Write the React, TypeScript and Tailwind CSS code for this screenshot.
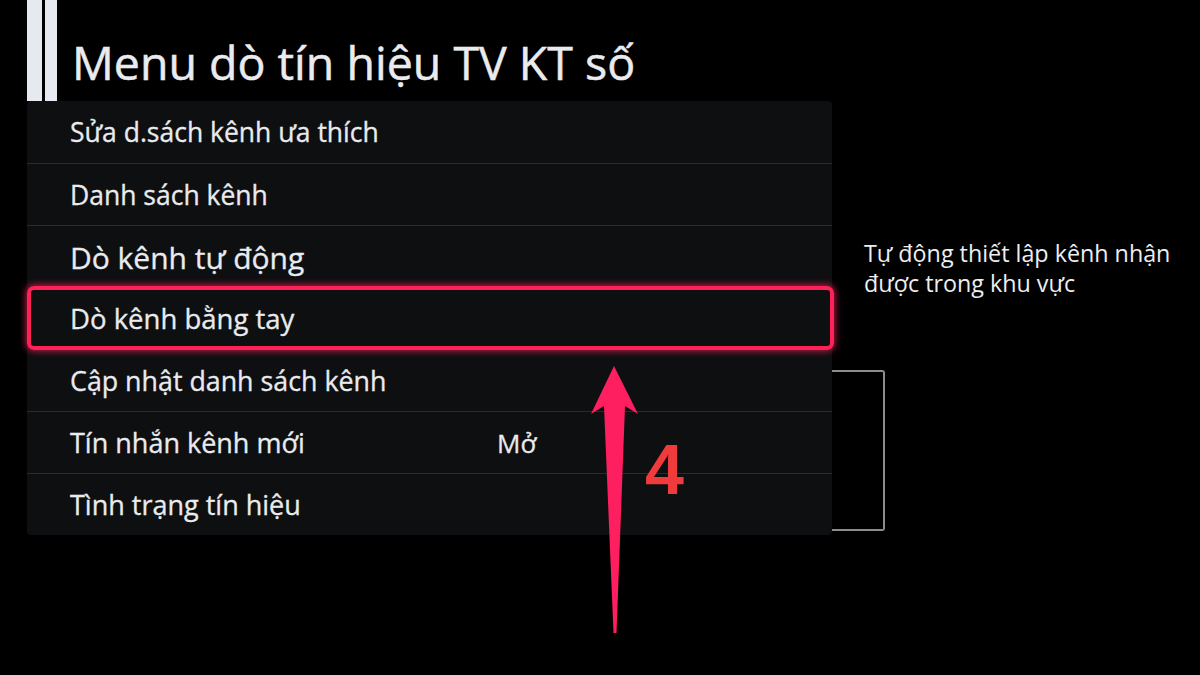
const items: { label: string; value?: string; size: string }[] = [
  { label: 'Sửa d.sách kênh ưa thích', size: 'text-[26.5px]' },
  { label: 'Danh sách kênh', size: 'text-[26.5px]' },
  { label: 'Dò kênh tự động', size: 'text-[30px]' },
  { label: 'Dò kênh bằng tay', size: 'text-[27.5px]' },
  { label: 'Cập nhật danh sách kênh', size: 'text-[26.8px]' },
  { label: 'Tín nhắn kênh mới', value: 'Mở', size: 'text-[27px]' },
  { label: 'Tình trạng tín hiệu', size: 'text-[27px]' },
];

const SELECTED = 3;

export default function App() {
  return (
    <div
      className="relative w-[1200px] h-[675px] overflow-hidden bg-black text-[#e9ebee]"
      style={{ fontFamily: '"Open Sans", "Noto Sans", sans-serif' }}
    >
      {/* tiêu đề */}
      <div className="flex h-[101px] pl-[27px]">
        <div className="w-[15px] h-full bg-[#e6eaf0]" />
        <div className="w-[12px] h-full ml-[3px] bg-[#e6eaf0]" />
        <h1 className="ml-[15px] mt-[34px] text-[46.5px] leading-[56px] [-webkit-text-stroke:0.5px_#e9ebee]">
          Menu dò tín hiệu TV KT số
        </h1>
      </div>

      <div className="flex">
        {/* danh sách menu */}
        <div className="ml-[27px] w-[805px] bg-[#0e0f11] rounded-sm">
          {items.map((it, i) => {
            const sel = i === SELECTED;
            const line = i > 0 && i !== SELECTED && i !== SELECTED + 1;
            return (
              <div
                key={it.label}
                className={
                  'relative flex items-center h-[62px] pl-[43px] [-webkit-text-stroke:0.3px_#e9ebee] ' +
                  (line ? 'border-t border-[#2a2b2e] ' : '') +
                  (sel ? 'z-10' : '')
                }
              >
                {sel && (
                  <div className="absolute -top-[1px] -bottom-[1px] left-0 -right-[2px] rounded-[7px] border-[4px] border-[#ff2259] shadow-[0_0_7px_1px_rgba(255,34,89,0.75)]" />
                )}
                <span className={it.size + ' w-[427px] whitespace-nowrap pt-[2px]'}>{it.label}</span>
                {it.value && <span className="text-[26px] pt-[2px]">{it.value}</span>}
              </div>
            );
          })}
        </div>

        {/* mô tả bên phải */}
        <div className="flex flex-col">
          <p className="ml-[32px] mt-[137px] text-[23.3px] leading-[30px] text-[#eceef0]">
            Tự động thiết lập kênh nhận
            <br />
            được trong khu vực
          </p>
          <div className="mt-[72px] w-[53px] h-[161px] border-y-2 border-r-2 border-[#8c8c8c] rounded-r-[3px]" />
        </div>
      </div>

      {/* mũi tên chú thích */}
      <svg className="absolute left-0 top-0" width="1200" height="675" viewBox="0 0 1200 675">
        <path
          d="M614 366 L638 414 L625 406 L616.5 633 L613.5 633 L604 406 L591 414 Z"
          fill="#fd1f60"
        />
      </svg>
      <div
        className="absolute left-[645px] top-[430px] text-[70px] leading-[80px] font-bold text-[#ef3b3c]"
        style={{ fontFamily: '"Liberation Sans", Arial, sans-serif' }}
      >
        4
      </div>
    </div>
  );
}
